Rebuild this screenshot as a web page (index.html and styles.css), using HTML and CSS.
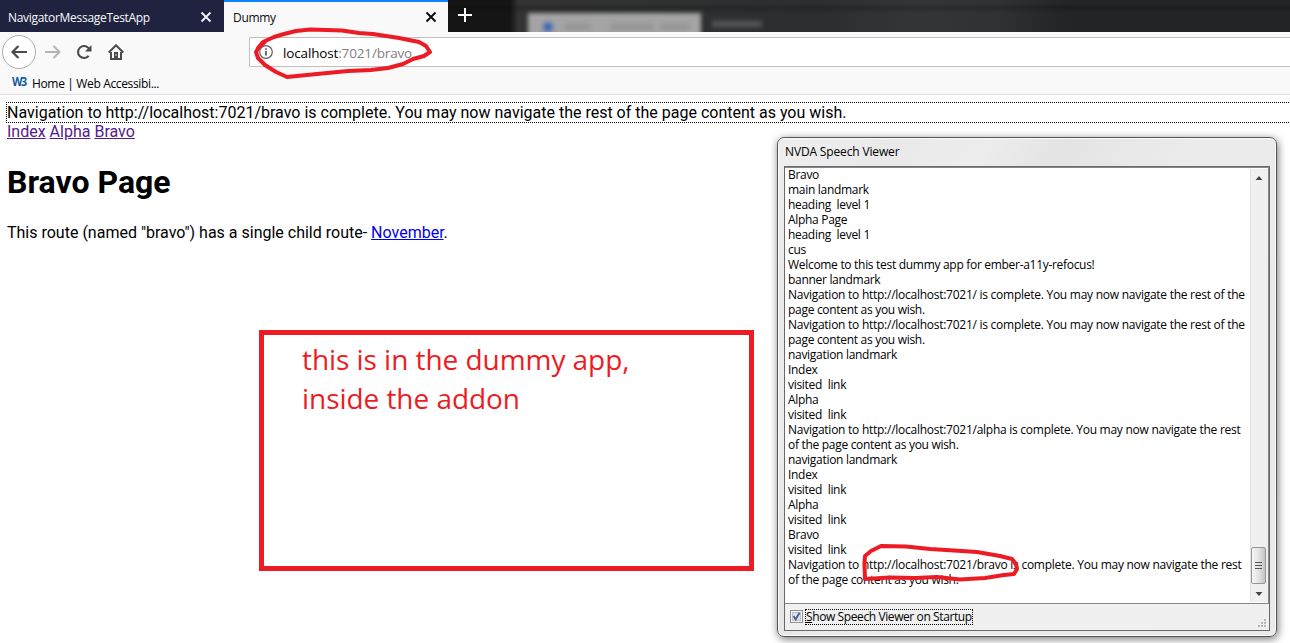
FILE: index.html
```
<!DOCTYPE html>
<html lang="en">
<head>
<meta charset="utf-8">
<title>Dummy</title>
<link rel="stylesheet" href="styles.css">
</head>
<body>
<header class="browser">
  <div class="tabs">
    <div class="tab"><span class="tab-old">NavigatorMessageTestApp</span><svg width="12" height="12" viewBox="0 0 12 12"><path d="M1.500 1.500l9 9M10.500 1.500l-9 9" stroke="#f4f4f5" stroke-width="1.800"/></svg></div>
    <div class="tab active"><span class="tab-new">Dummy</span><svg width="12" height="12" viewBox="0 0 12 12"><path d="M1.500 1.500l9 9M10.500 1.500l-9 9" stroke="#0c0c0d" stroke-width="1.900"/></svg></div>
    <div class="glass">
      <svg class="plus" width="14" height="14" viewBox="0 0 14 14"><path d="M7 0v14M0 7h14" stroke="#fff" stroke-width="2"/></svg>
      <svg class="ghost" width="330" height="32" viewBox="0 0 330 32">
        <defs><filter id="soft" x="-20%" y="-20%" width="140%" height="140%"><feGaussianBlur stdDeviation="2"/></filter></defs>
        <g filter="url(#soft)">
          <rect x="16" y="13" width="173" height="26" fill="#a4a4a4"/>
          <circle cx="36" cy="27" r="5.500" fill="#426db5"/>
          <path d="M53 27h26M98 27h44M148 27h30" stroke="#949494" stroke-width="6"/>
          <path d="M200 24h50" stroke="#505354" stroke-width="7"/>
        </g>
      </svg>
    </div>
  </div>
  <div class="toolbar">
    <div class="back"><svg width="18" height="16" viewBox="0 0 18 16"><path d="M17 8H3M8.500 2L2.500 8l6 6" fill="none" stroke="#4a4a4c" stroke-width="2.200"/></svg></div>
    <svg class="forward" width="18" height="16" viewBox="0 0 18 16"><path d="M1 8h14M9.500 2l6 6-6 6" fill="none" stroke="#b5b5b5" stroke-width="2"/></svg>
    <svg class="reload" width="16" height="16" viewBox="0 0 16 16"><path d="M12.700 11.800a6 6 0 1 1 .2-7.300" fill="none" stroke="#4a4a4c" stroke-width="2.100"/><path d="M15.500 1v6.500H9z" fill="#4a4a4c"/></svg>
    <svg class="home" width="16" height="16" viewBox="0 0 16 16"><path d="M.7 8.500L8 1.300l7.300 7.200" fill="none" stroke="#4a4a4c" stroke-width="2"/><path d="M3 8v7h10V8" fill="none" stroke="#4a4a4c" stroke-width="2"/><path d="M6 8h4v6H6z" fill="#4a4a4c"/><path d="M8 10v2" stroke="#ddd"/></svg>
    <div class="url">
      <svg width="14" height="14" viewBox="0 0 14 14"><circle cx="7" cy="7" r="6.300" fill="none" stroke="#5f5f60" stroke-width="1.200"/><path d="M7 6v4.500M7 3.200v1.600" stroke="#4a4a4c" stroke-width="1.600"/></svg>
      <span class="address">localhost<span class="path">:7021/bravo</span></span>
    </div>
  </div>
  <div class="bookmarks"><span class="w3">W3</span><span class="bookmark">Home | Web Accessibi...</span></div>
</header>

<main class="page">
  <div class="message">Navigation to http://localhost:7021/bravo is complete. You may now navigate the rest of the page content as you wish.</div>
  <nav class="links"><a class="visited">Index</a> <a class="visited">Alpha</a> <a class="visited">Bravo</a></nav>
  <h1 class="title">Bravo Page</h1>
  <p class="copy">This route (named "bravo") has a single child route- <a class="fresh">November</a>.</p>
</main>

<aside class="note"><div class="note-a">this is in the dummy app,</div><div class="note-b">inside the addon</div></aside>

<section class="viewer">
  <div class="caption"><span>NVDA Speech Viewer</span></div>
  <div class="client">
    <div class="log">
      <div class="lines">
        <div>Bravo</div>
        <div>main landmark</div>
        <div>heading  level 1</div>
        <div>Alpha Page</div>
        <div>heading  level 1</div>
        <div>cus</div>
        <div>Welcome to this test dummy app for ember-a11y-refocus!</div>
        <div>banner landmark</div>
        <div class="long">Navigation to http://localhost:7021/ is complete. You may now navigate the rest of the</div>
        <div>page content as you wish.</div>
        <div class="long">Navigation to http://localhost:7021/ is complete. You may now navigate the rest of the</div>
        <div>page content as you wish.</div>
        <div>navigation landmark</div>
        <div>Index</div>
        <div>visited  link</div>
        <div>Alpha</div>
        <div>visited  link</div>
        <div class="long">Navigation to http://localhost:7021/alpha is complete. You may now navigate the rest</div>
        <div>of the page content as you wish.</div>
        <div>navigation landmark</div>
        <div>Index</div>
        <div>visited  link</div>
        <div>Alpha</div>
        <div>visited  link</div>
        <div>Bravo</div>
        <div>visited  link</div>
        <div class="long">Navigation to http://localhost:7021/bravo is complete. You may now navigate the rest</div>
        <div>of the page content as you wish.</div>
      </div>
      <div class="scroll">
        <svg width="8" height="4" viewBox="0 0 8 4"><path d="M.5 4L4 0l3.500 4z" fill="#444"/></svg>
        <div class="thumb"><i></i><i></i><i></i></div>
        <svg width="8" height="4" viewBox="0 0 8 4"><path d="M.5 0L4 4l3.500-4z" fill="#444"/></svg>
      </div>
    </div>
    <div class="footer">
      <svg class="check" width="13" height="13" viewBox="0 0 13 13"><rect x=".5" y=".5" width="12" height="12" fill="#f4f4f4" stroke="#8e8f8f"/><rect x="2.500" y="2.500" width="8" height="8" fill="#e0e4ea" stroke="#bcc3ce"/><path d="M3.500 6l2.200 3.500L9.500 2.800" fill="none" stroke="#4a5f97" stroke-width="1.900"/></svg>
      <span class="startup"><u>S</u>how Speech Viewer on Startup</span>
      <svg class="grip" width="9" height="9" viewBox="0 0 9 9" fill="#b5b5b5"><path d="M6 0h2v2H6zM3 3h2v2H3zM6 3h2v2H6zM0 6h2v2H0zM3 6h2v2H3zM6 6h2v2H6z"/></svg>
    </div>
  </div>
</section>

<svg class="marks" width="1290" height="643" viewBox="0 0 1290 643">
  <path d="M258 48L263 42L274 37L284 34L296 31L310 29.500L342 30.500L359 33L373 34L399 38L419 42L426 46L430 52L424 56L413 59L403 64L388 68L371 70L348 71L317 74L287 77L276 72L265 65L258 58L256 52L259 47L265 42"/>
  <path d="M865 579L864.500 564L865 556L871 551L881 546L906 546.500L930 549L962 551L977 552L1000 556L1012 559L1016 564L1017 569L1014 574L1004 575L985 578L960 579.500L937 577L915 578L890 577.500L865 579"/>
</svg>
</body>
</html>
```
FILE: styles.css
```
* { box-sizing: border-box; }
body { margin: 0; width: 1290px; height: 643px; overflow: hidden; background: #fff; color: #000; font: 16px/19px Roboto, sans-serif; }
svg { display: block; flex: none; }

.browser { height: 95px; background: #f9f9fa; border-bottom: 1px solid #dcdcdc; font-family: "Open Sans", sans-serif; font-size: 12px; }
.tabs { display: flex; height: 32px; }
.tab { width: 224px; padding: 2px 12px 0 8px; display: flex; align-items: center; justify-content: space-between; background: #202340; color: #f9f9fa; white-space: nowrap; }
.tab.active { background: #f9f9fa; color: #0c0c0d; border-top: 2px solid #0a84ff; padding: 0 11px 0 9px; }
.tab-old { letter-spacing: -.3px; }
.tab-new { letter-spacing: -.3px; }
.glass { flex: 1; display: flex; align-items: center; background: linear-gradient(180deg, transparent 0 4px, rgba(0,0,0,.18) 7px, transparent 14px), linear-gradient(90deg, #151515 0 62px, #333 70px, #2b2d2e 370px, #343536 470px, #303132 550px, #222425 620px, #222425); }
.plus { margin: 0 0 2px 10px; }
.ghost { margin-left: 40px; }

.toolbar { display: flex; align-items: center; height: 40px; }
.back { width: 34px; height: 34px; margin-left: 2px; border: 1px solid #adadad; border-radius: 50%; background: #fff; display: flex; align-items: center; justify-content: center; }
.forward { margin-left: 8px; }
.reload { margin-left: 14px; }
.home { margin-left: 16px; }
.url { flex: 1; height: 30px; margin-left: 125px; padding-left: 9px; border: 1px solid #bfbfbf; border-right: 0; border-radius: 2px 0 0 2px; background: #fff; display: flex; align-items: center; gap: 10px; }
.address { font-size: 13.500px; letter-spacing: -.15px; padding-top: 2px; }
.path { color: #808080; }
.bookmarks { display: flex; align-items: center; height: 22px; padding-left: 12px; }
.bookmark { letter-spacing: -.35px; }
.w3 { width: 20px; color: #125a9e; font: bold 12px/16px "Open Sans", sans-serif; letter-spacing: -1.500px; transform: translateY(-1px) scaleX(.9); transform-origin: left; }

.page { padding: 8px 0 0 7px; }
.message { height: 19px; outline: 1px dotted #000; white-space: nowrap; }
.links { height: 19px; }
.visited { color: #551a8b; text-decoration: underline; }
.fresh { color: #0000ee; text-decoration: underline; }
.title { margin: 22px 0; font-size: 32px; line-height: 38px; font-weight: bold; }
.copy { margin: 0; }

.note { position: absolute; left: 259px; top: 330px; width: 495px; height: 241px; border: 5px solid #ed1c24; padding: 5px 0 0 38px; color: #ed1c24; font: 28px/39px "Open Sans", sans-serif; letter-spacing: -.05px; white-space: nowrap; }

.viewer { position: absolute; left: 777px; top: 137px; width: 500px; height: 500px; border: 1px solid #555; border-radius: 7px; background: linear-gradient(125deg, #eee 0, #e9e9e9 15%, #ededed 25%, #e4e4e4 34%, #ebebeb 50%, #e9e9e9); box-shadow: inset 0 0 0 1px #fafafa, 1px 2px 8px rgba(0,0,0,.55); padding: 0 6px 6px; font: 12px/15px "Open Sans", sans-serif; }
.caption { height: 28px; padding: 6px 0 0 1px; letter-spacing: -.15px; }
.client { height: 465px; border: 1px solid #696969; background: #f0f0f0; }
.log { display: flex; height: 437px; border: 1px solid #828790; border-width: 1px 1px 1px 0; background: #fff; }
.lines { flex: 1; margin-top: -1px; padding: 0 0 0 3px; white-space: pre; letter-spacing: -.3px; display: flex; flex-direction: column; }
.lines div { height: 15px; }
.lines .long { letter-spacing: -.26px; }
.scroll { width: 18px; margin: 1px 0; padding: 7px 2px 6px 0; background: #f0f0f0; border-left: 1px solid #e3e3e3; display: flex; flex-direction: column; align-items: center; }
.thumb { width: 15px; height: 37px; margin: auto 0 8px; border: 1px solid #979797; border-radius: 2px; background: linear-gradient(90deg, #f7f7f7, #e3e3e3 50%, #c4c4c4); display: flex; flex-direction: column; align-items: center; justify-content: center; gap: 2px; }
.thumb i { width: 7px; height: 1px; background: #555; }
.footer { display: flex; align-items: center; height: 25px; padding-left: 5px; }
.startup { margin-left: 2px; height: 16px; line-height: 14px; border: 1px dotted #000; letter-spacing: -.4px; white-space: nowrap; }
.grip { margin: 14px 2px 0 auto; }
.marks { position: absolute; left: 0; top: 0; fill: none; stroke: #ed1c24; stroke-width: 4; stroke-linejoin: round; stroke-linecap: round; pointer-events: none; }
```
